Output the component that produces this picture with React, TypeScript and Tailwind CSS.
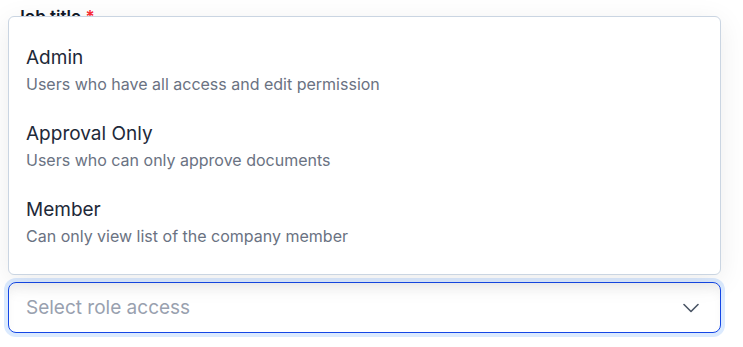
const ROLES = [
  { name: "Admin", description: "Users who have all access and edit permission" },
  { name: "Approval Only", description: "Users who can only approve documents" },
  { name: "Member", description: "Can only view list of the company member" },
];

export default function App() {
  return (
    <div className="min-h-screen bg-white font-['Inter','Noto_Sans',sans-serif]">
      <div className="ml-2 w-[713px] pt-[5px]">
        {/* Job title label (mostly covered by the open menu) */}
        <label className="block pl-[7px] text-[17px] font-semibold leading-6 text-gray-900">
          Job title <span className="text-red-500">*</span>
        </label>

        {/* Fields hidden behind the menu */}
        <div className="h-[253px]" />

        {/* Role access select */}
        <div className="relative">
          <div className="absolute bottom-full left-0 right-0 mb-[7px] rounded-md border border-slate-300 bg-white pt-[16px] pb-[13px] shadow-[0_6px_28px_rgba(0,0,0,0.08)]">
            {ROLES.map((role) => (
              <div key={role.name} className="px-[17px] pt-3 pb-[14px]">
                <div className="text-[19px] leading-[26px] text-gray-800">{role.name}</div>
                <div className="mt-[2px] text-[16px] leading-[22px] text-gray-500">{role.description}</div>
              </div>
            ))}
          </div>

          <button
            type="button"
            className="flex h-[51px] w-full items-center justify-between rounded-lg border border-blue-700 bg-white pl-[17px] pr-[21px] shadow-[inset_0_8px_12px_-4px_rgba(0,0,0,0.07)] ring-4 ring-blue-100"
          >
            <span className="pt-[2px] text-[19px] text-gray-400">Select role access</span>
            <svg width="16" height="10" viewBox="0 0 16 10" fill="none" className="text-gray-600">
              <path d="M1 1.5L8 8.5L15 1.5" stroke="currentColor" strokeWidth="1.6" strokeLinecap="round" strokeLinejoin="round" />
            </svg>
          </button>
        </div>
      </div>
    </div>
  );
}
